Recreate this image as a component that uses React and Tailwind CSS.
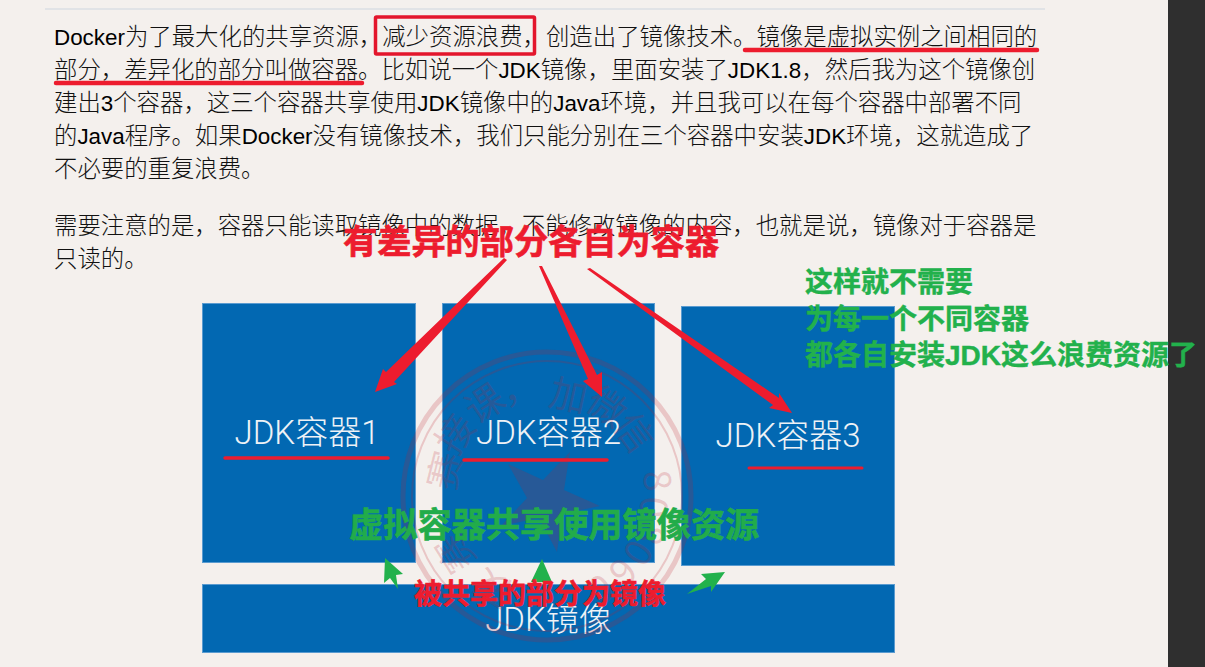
const Box = ({ className, children }) => (
  <div className={`bg-[#0268b2] border border-[#5a9bd0] flex items-center justify-center text-[#eef2f6] font-['Roboto','Noto_Sans_CJK_SC',sans-serif] font-light text-[33px] ${className}`}>
    {children}
  </div>
);

// Latin in the article runs a little smaller than the CJK
const L = ({ children }) => <span className="text-[22.4px] font-normal text-black">{children}</span>;

const stampChars = [
  ["赛", -76, 105],
  ["接", -56, 111],
  ["课", -34, 112],
  ["，", -14, 112],
  ["加", 12, 103],
  ["微", 34, 108],
  ["信", 54, 108],
  ["8", 82, 112],
  ["0", 96, 108],
  ["8", 110, 110],
  ["0", 122, 108],
  ["6", 135, 108],
  ["0", 150, 108],
  ["夜", -150, 108],
  ["赛", -122, 108],
];

const Annotations = () => (
  <svg className="absolute inset-0 w-[1205px] h-[667px] pointer-events-none" viewBox="0 0 1205 667">
    {/* stamp */}
    <g fill="none" stroke="#be1e2d" strokeOpacity="0.2">
      <circle cx="547" cy="496" r="144" strokeWidth="5" />
      <circle cx="547" cy="496" r="135" strokeWidth="2" />
    </g>
    <polygon
      points="570,452 564,490 600,506 562,514 557,552 539,518 501,526 527,498 508,464 543,480"
      fill="#be1e2d"
      fillOpacity="0.2"
    />
    {stampChars.map(([ch, angle, r], i) => (
      <text
        key={i}
        x="547"
        y={496 - r + 14}
        textAnchor="middle"
        fontSize="38"
        fill="#be1e2d"
        fillOpacity="0.2"
        fontFamily="'Noto Sans CJK SC', sans-serif"
        transform={`rotate(${angle} 547 496)`}
      >
        {ch}
      </text>
    ))}

    {/* text marks */}
    <rect x="375.5" y="17" width="159" height="37" rx="1" fill="none" stroke="#e3162c" strokeWidth="3.5" />
    <line x1="745" y1="50" x2="1037" y2="50" stroke="#ed1c2e" strokeWidth="4.5" strokeLinecap="round" />
    <line x1="56" y1="83" x2="362" y2="83" stroke="#ed1c2e" strokeWidth="4.5" strokeLinecap="round" />

    {/* red arrows */}
    <polygon points="504,258 507,260 394,382 397,384 375,392 383,369 386,372" fill="#ed1c2e" />
    <polygon points="539,266 542,266 597,375 602,372 602,397 583,381 588,379" fill="#ed1c2e" />
    <polygon points="587,269 590,268 779,398 779,393 792,413 769,408 773,405" fill="#ed1c2e" />
    <line x1="225" y1="458" x2="388" y2="458" stroke="#ed1c2e" strokeWidth="3.5" strokeLinecap="round" />
    <line x1="464" y1="460" x2="607" y2="460" stroke="#ed1c2e" strokeWidth="3.5" strokeLinecap="round" />
    <line x1="749" y1="468" x2="862" y2="468" stroke="#ed1c2e" strokeWidth="3" strokeLinecap="round" />

    {/* green arrows */}
    <polygon points="385,558 403,574 396,575 398,589 390,578 384,583" fill="#22b14c" />
    <polygon points="542,559 552,582 531,582" fill="#22b14c" />
    <polygon points="725,572 701,574 706,579 687,594 711,586 711,592" fill="#22b14c" />
  </svg>
);

export default function App() {
  return (
    <div className="relative flex h-[667px] overflow-hidden bg-[#f4f0ed] font-['Liberation_Sans','Noto_Sans_CJK_SC',sans-serif]">
      <main className="w-[1168px] pl-[45px] pt-[8px]">
        <div className="w-[1000px] border-t-2 border-[#e1e3e6]" />
        <article className="pl-[9px] w-[995px] pt-[11px] text-[23.4px] leading-[33px] text-[#111] font-light">
          <p>
            <L>Docker</L>为了最大化的共享资源，减少资源浪费，创造出了镜像技术。镜像是虚拟实例之间相同的部分，差异化的部分叫做容器。比如说一个<L>JDK</L>镜像，里面安装了<L>JDK1.8</L>，然后我为这个镜像创建出<L>3</L>个容器，这三个容器共享使用<L>JDK</L>镜像中的<L>Java</L>环境，并且我可以在每个容器中部署不同的<L>Java</L>程序。如果<L>Docker</L>没有镜像技术，我们只能分别在三个容器中安装<L>JDK</L>环境，这就造成了不必要的重复浪费。
          </p>
          <p className="mt-[24px]">
            需要注意的是，容器只能读取镜像中的数据，不能修改镜像的内容，也就是说，镜像对于容器是只读的。
          </p>
        </article>

        <section className="w-[693px] ml-[157px] mt-[27px]">
          <div className="flex gap-[26px] items-start">
            <Box className="w-[214px] h-[260px] pr-[4px]">JDK容器1</Box>
            <Box className="w-[213px] h-[260px]">JDK容器2</Box>
            <Box className="w-[214px] h-[260px] mt-[3px]">JDK容器3</Box>
          </div>
          <Box className="w-[693px] h-[69px] mt-[18px] pt-[3px]">JDK镜像</Box>
        </section>
      </main>
      <aside className="w-[37px] bg-[#2f2f2f]" />

      <Annotations />
      <p className="absolute left-[343px] top-[225px] text-[34.2px] leading-none font-bold text-[#ed1c2e] whitespace-nowrap [-webkit-text-stroke:0.6px_#ed1c2e]">
        有差异的部分各自为容器
      </p>
      <p className="absolute left-[349px] top-[508px] text-[34.2px] leading-none font-bold text-[#22ac4a] whitespace-nowrap [-webkit-text-stroke:0.6px_#22ac4a]">
        虚拟容器共享使用镜像资源
      </p>
      <p className="absolute left-[414px] top-[581px] text-[28px] leading-none font-bold text-[#ed1c2e] whitespace-nowrap [-webkit-text-stroke:0.6px_#ed1c2e]">
        被共享的部分为镜像
      </p>
      <p className="absolute left-[805px] top-[265px] text-[28px] leading-[36.5px] font-bold text-[#22b14c] whitespace-nowrap [-webkit-text-stroke:0.4px_#22b14c]">
        这样就不需要
        <br />
        为每一个不同容器
        <br />
        都各自安装JDK这么浪费资源了
      </p>
    </div>
  );
}
